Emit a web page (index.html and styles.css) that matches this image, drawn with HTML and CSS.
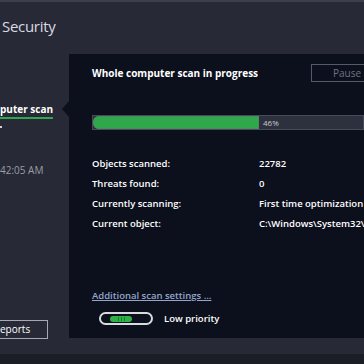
FILE: index.html
```html
<!DOCTYPE html>
<html>
<head>
<meta charset="utf-8">
<link rel="stylesheet" href="styles.css">
</head>
<body>
<div class="app">
  <header class="top">
    <div class="title">Security</div>
  </header>
  <div class="main">
    <aside class="side">
      <div class="nav-active">puter scan</div>
      <div class="nav-dot"></div>
      <div class="last-scan">42:05 AM</div>
      <div class="spacer"></div>
      <div class="reports">eports</div>
    </aside>
    <section class="panel">
      <div class="head">
        <div class="head-title">Whole computer scan in progress</div>
        <div class="pause">Pause</div>
      </div>
      <div class="track">
        <div class="fill"></div>
        <div class="pct">46%</div>
      </div>
      <div class="stats">
        <div class="label">Objects scanned:</div><div class="value">22782</div>
        <div class="label">Threats found:</div><div class="value">0</div>
        <div class="label">Currently scanning:</div><div class="value">First time optimization scan</div>
        <div class="label">Current object:</div><div class="value">C:\Windows\System32\DriverStore</div>
      </div>
      <div class="link">Additional scan settings ...</div>
      <div class="prio">
        <div class="toggle"><div class="knob"><i></i><i></i><i></i></div></div>
        <div class="prio-text">Low priority</div>
      </div>
    </section>
  </div>
  <footer class="bottom"></footer>
</div>
</body>
</html>
```
FILE: styles.css
```css
html, body {
  margin: 0;
  padding: 0;
  background: #272a36;
  overflow: hidden;
}
.app {
  width: 364px;
  height: 364px;
  overflow: hidden;
  display: flex;
  flex-direction: column;
  font-family: "Open Sans", "Liberation Sans", sans-serif;
  color: #ffffff;
}
.top {
  height: 52px;
  border-top: 2px solid #3d404b;
  flex: none;
}
.title {
  font-size: 15px;
  line-height: 20px;
  padding-top: 14px;
  padding-left: 2px;
  color: #d9dbe2;
  letter-spacing: -0.3px;
}
.main {
  display: flex;
  height: 298px;
  flex: none;
}
.side {
  width: 69px;
  flex: none;
  display: flex;
  flex-direction: column;
  overflow: hidden;
}
.nav-active {
  margin-top: 49px;
  width: 53px;
  font-size: 10px;
  font-weight: 700;
  line-height: 12px;
  padding-bottom: 2px;
  border-bottom: 2px solid #2fa84d;
  white-space: nowrap;
}
.nav-dot {
  width: 2px;
  height: 2px;
  background: #cfd1d6;
  margin-top: 7px;
}
.last-scan {
  margin-top: 36px;
  font-size: 10px;
  line-height: 12px;
  color: #9a9ca6;
  white-space: nowrap;
}
.spacer { flex: 1; }
.reports {
  width: 47px;
  height: 17px;
  border: 1px solid #a7a9b0;
  border-left: none;
  font-size: 10px;
  line-height: 17px;
  color: #ffffff;
  margin-bottom: 13px;
}
.panel {
  position: relative;
  width: 340px;
  height: 284px;
  flex: none;
  background: #0c101d;
  padding: 10px 26px 0 23px;
  box-sizing: border-box;
  display: flex;
  flex-direction: column;
}
.panel::before {
  content: "";
  position: absolute;
  left: -7px;
  top: 47px;
  border-top: 8px solid transparent;
  border-bottom: 8px solid transparent;
  border-right: 7px solid #0c101d;
}
.head {
  display: flex;
  justify-content: space-between;
  align-items: center;
  height: 18px;
}
.head-title {
  font-size: 10px;
  font-weight: 700;
  white-space: nowrap;
}
.pause {
  width: 70px;
  height: 16px;
  border: 1px solid #55596a;
  font-size: 10px;
  line-height: 16px;
  color: #6f7382;
  text-align: center;
}
.track {
  margin-top: 33px;
  width: 270px;
  height: 13px;
  background: #2d303d;
  border: 1px solid #474a58;
  display: flex;
  align-items: center;
  box-sizing: content-box;
}
.fill {
  width: 166px;
  height: 13px;
  background: #2fa84c;
  border-radius: 6px 0 0 6px;
  box-shadow: inset 0 0 0 1px #4f8a5f;
}
.pct {
  margin-left: 4px;
  font-size: 8px;
  color: #c9cbd2;
}
.stats {
  margin-top: 23px;
  display: grid;
  grid-template-columns: 167px auto;
  grid-auto-rows: 20px;
  align-items: center;
  font-size: 9.5px;
  font-weight: 600;
  white-space: nowrap;
}
.link {
  margin-top: 56px;
  font-size: 9.5px;
  font-weight: 600;
  line-height: 14px;
  color: #93a6cb;
  text-decoration: underline;
  white-space: nowrap;
}
.prio {
  margin-top: 9px;
  display: flex;
  align-items: center;
  gap: 11px;
  padding-left: 7px;
}
.toggle {
  width: 41px;
  height: 9px;
  border: 2px solid #d8dadf;
  border-radius: 7px;
  display: flex;
  align-items: center;
  padding-left: 9px;
  box-sizing: content-box;
}
.knob {
  width: 22px;
  height: 6px;
  border-radius: 3px;
  background: #2cb248;
  display: flex;
  justify-content: center;
  align-items: center;
  gap: 2px;
}
.knob i {
  width: 1px;
  height: 4px;
  background: #1c7a32;
}
.prio-text {
  font-size: 9.5px;
  font-weight: 600;
  white-space: nowrap;
}
.bottom {
  height: 12px;
  margin-top: 2px;
  background: #1c1e26;
  flex: none;
}
```
